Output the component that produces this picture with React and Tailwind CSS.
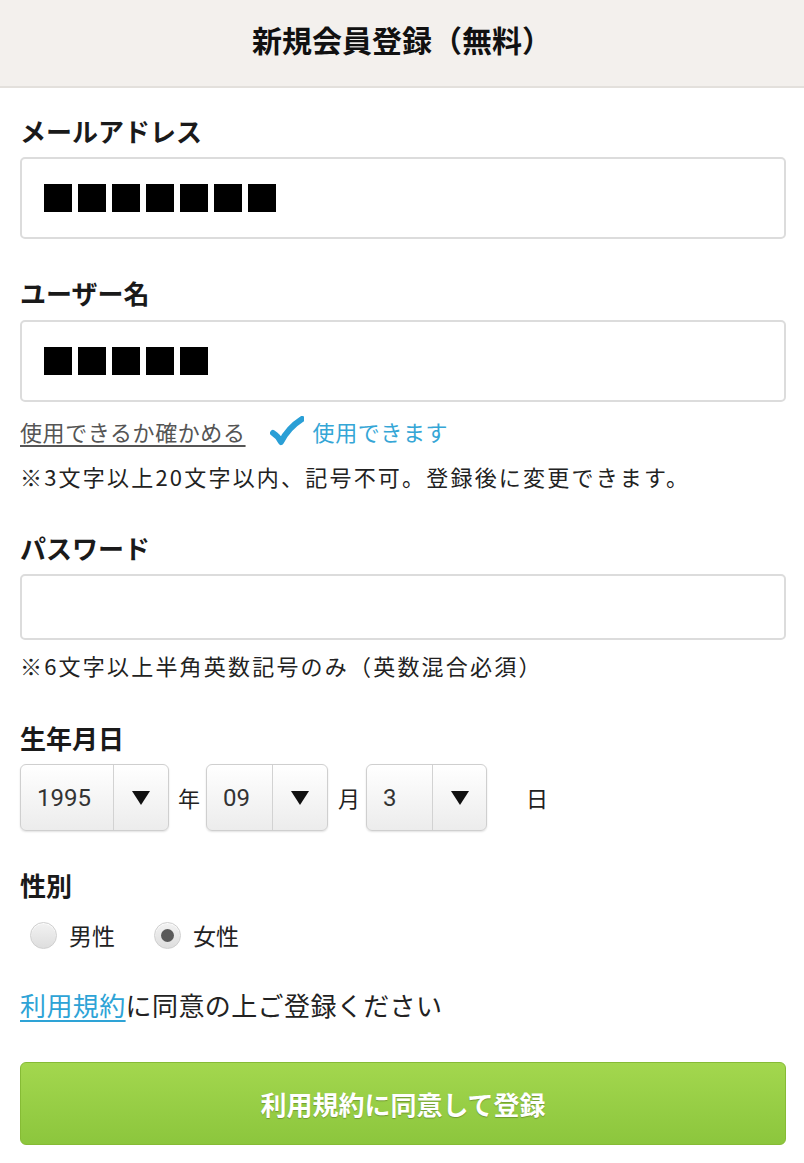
import React from "react";

const font = { fontFamily: '"Noto Sans CJK JP", "Noto Sans", sans-serif' };

function Squares({ n }) {
  return (
    <div className="flex gap-[6px] pl-[22px]">
      {Array.from({ length: n }).map((_, i) => (
        <div key={i} className="w-[28px] h-[28px] bg-black" />
      ))}
    </div>
  );
}

function Select({ value, w, left }) {
  return (
    <div
      className="flex h-[67px] rounded-[6px] border border-[#cfcfcf] bg-gradient-to-b from-white to-[#ececec] shadow-[0_1px_2px_rgba(0,0,0,0.12)]"
      style={{ width: w }}
    >
      <div
        className="flex items-center pl-[16px] text-[24px] text-[#333] border-r border-[#d2d2d2]"
        style={{ width: left, fontFamily: 'Roboto, "Noto Sans", sans-serif' }}
      >
        {value}
      </div>
      <div className="flex-1 flex items-center justify-center">
        <svg width="18" height="14" viewBox="0 0 18 14">
          <path d="M0 0 H18 L9 14 Z" fill="#111" />
        </svg>
      </div>
    </div>
  );
}

function Radio({ checked }) {
  return (
    <div className="w-[27px] h-[27px] rounded-full border border-[#cfcfcf] bg-gradient-to-b from-[#f2f2f2] to-[#dedede] flex items-center justify-center shadow-[inset_0_1px_1px_rgba(255,255,255,0.8)]">
      {checked && <div className="w-[13px] h-[13px] rounded-full bg-[#5a5a5a]" />}
    </div>
  );
}

export default function App() {
  return (
    <div className="w-[804px] min-h-[1163px] bg-white text-[#1a1a1a]" style={font}>
      <div className="h-[88px] bg-[#f3f0ed] border-b-2 border-[#e3e0dc] flex items-center justify-center pb-[8px]">
        <h1 className="text-[30px] font-bold text-[#111] leading-none">新規会員登録（無料）</h1>
      </div>

      <div className="pl-[20px] pr-[18px] pb-[18px]">
        <div className="mt-[25px] text-[26px] font-bold leading-[36px]">メールアドレス</div>
        <div className="mt-[8px] h-[82px] rounded-[5px] border-2 border-[#dcdcdc] flex items-center">
          <Squares n={7} />
        </div>

        <div className="mt-[36px] text-[26px] font-bold leading-[36px]">ユーザー名</div>
        <div className="mt-[9px] h-[82px] rounded-[5px] border-2 border-[#dcdcdc] flex items-center">
          <Squares n={5} />
        </div>

        <div className="mt-[13px] flex items-center h-[32px] text-[22px] tracking-[0.6px]">
          <span className="text-[#555] underline underline-offset-[4px] decoration-[2px]">使用できるか確かめる</span>
          <svg className="ml-[24px]" width="34" height="30" viewBox="0 0 34 30">
            <path d="M3 17 Q8 20 11 26 Q18 12 32 3" fill="none" stroke="#2a9fd6" strokeWidth="6" strokeLinecap="round" strokeLinejoin="round" />
          </svg>
          <span className="ml-[9px] text-[#35a6d6]">使用できます</span>
        </div>
        <div className="mt-[13px] text-[22px] leading-[32px] text-[#222] tracking-[2.2px]">※3文字以上20文字以内、記号不可。登録後に変更できます。</div>

        <div className="mt-[38px] text-[26px] font-bold leading-[36px]">パスワード</div>
        <div className="mt-[8px] h-[66px] rounded-[5px] border-2 border-[#dcdcdc]" />
        <div className="mt-[9px] text-[22px] leading-[32px] text-[#222] tracking-[2.2px]">※6文字以上半角英数記号のみ（英数混合必須）</div>

        <div className="mt-[39px] text-[26px] font-bold leading-[36px]">生年月日</div>
        <div className="mt-[8px] flex items-center text-[22px] text-[#222]">
          <Select value="1995" w={149} left={93} />
          <span className="ml-[9px] w-[28px]">年</span>
          <Select value="09" w={122} left={66} />
          <span className="ml-[10px] w-[28px]">月</span>
          <Select value="3" w={121} left={66} />
          <span className="ml-[39px]">日</span>
        </div>

        <div className="mt-[36px] text-[26px] font-bold leading-[36px]">性別</div>
        <div className="mt-[14px] h-[36px] flex items-center text-[23px] text-[#222]">
          <div className="ml-[10px]"><Radio /></div>
          <span className="ml-[12px]">男性</span>
          <div className="ml-[39px]"><Radio checked /></div>
          <span className="ml-[12px]">女性</span>
        </div>

        <div className="mt-[34px] text-[26px] leading-[36px] text-[#222] tracking-[0.4px]">
          <span className="text-[#2ea3d6] underline underline-offset-[4px]">利用規約</span>に同意の上ご登録ください
        </div>

        <button className="mt-[39px] w-full h-[83px] rounded-[6px] border border-[#86bb35] bg-gradient-to-b from-[#a3d74e] to-[#8cc63d] text-white text-[26px] font-bold flex items-center justify-center [text-shadow:0_1px_1px_rgba(0,0,0,0.25)]" style={font}>
          利用規約に同意して登録
        </button>
      </div>
    </div>
  );
}
